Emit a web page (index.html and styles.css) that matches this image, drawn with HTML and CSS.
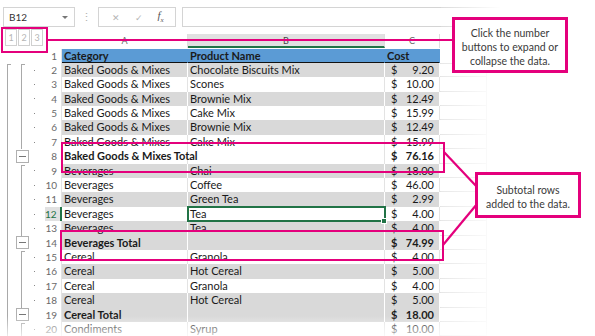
FILE: index.html
```html
<!DOCTYPE html>
<html lang="en">
<head>
    <meta charset="UTF-8">
    <meta name="viewport" content="width=device-width, initial-scale=1.0">
    <title>Subtotal outline</title>
    <link rel="stylesheet" href="styles.css">
</head>
<body>
    <div class="formula-bar">
        <div class="name-box"><span>B12</span><span class="arrow"></span></div>
        <div class="grip">&#8942;</div>
        <div class="fb-buttons">
            <span>&#10005;</span>
            <span>&#10003;</span>
            <span class="fx"><i>f</i><sub>x</sub></span>
        </div>
        <div class="fb-input"></div>
    </div>

    <div class="sheet-head">
        <div class="levels">
            <span>1</span><span>2</span><span>3</span>
        </div>
        <div class="corner"></div>
        <div class="col-head">A</div>
        <div class="col-head active">B</div>
        <div class="col-head">C</div>
        <div class="col-head"></div>
    </div>

    <div class="sheet">
        <div class="row head">
            <div class="ol"></div>
            <div class="rn">1</div>
            <div class="c">Category</div>
            <div class="c">Product Name</div>
            <div class="c">Cost</div>
            <div class="d"></div>
        </div>
        <div class="row band">
            <div class="ol"><span class="g1 first"></span><span class="g2 first"></span><span class="g3"></span></div>
            <div class="rn">2</div>
            <div class="c">Baked Goods &amp; Mixes</div>
            <div class="c">Chocolate Biscuits Mix</div>
            <div class="c cost"><span>$</span><span>9.20</span></div>
            <div class="d"></div>
        </div>
        <div class="row">
            <div class="ol"><span class="g1"></span><span class="g2"></span><span class="g3"></span></div>
            <div class="rn">3</div>
            <div class="c">Baked Goods &amp; Mixes</div>
            <div class="c">Scones</div>
            <div class="c cost"><span>$</span><span>10.00</span></div>
            <div class="d"></div>
        </div>
        <div class="row band">
            <div class="ol"><span class="g1"></span><span class="g2"></span><span class="g3"></span></div>
            <div class="rn">4</div>
            <div class="c">Baked Goods &amp; Mixes</div>
            <div class="c">Brownie Mix</div>
            <div class="c cost"><span>$</span><span>12.49</span></div>
            <div class="d"></div>
        </div>
        <div class="row">
            <div class="ol"><span class="g1"></span><span class="g2"></span><span class="g3"></span></div>
            <div class="rn">5</div>
            <div class="c">Baked Goods &amp; Mixes</div>
            <div class="c">Cake Mix</div>
            <div class="c cost"><span>$</span><span>15.99</span></div>
            <div class="d"></div>
        </div>
        <div class="row band">
            <div class="ol"><span class="g1"></span><span class="g2"></span><span class="g3"></span></div>
            <div class="rn">6</div>
            <div class="c">Baked Goods &amp; Mixes</div>
            <div class="c">Brownie Mix</div>
            <div class="c cost"><span>$</span><span>12.49</span></div>
            <div class="d"></div>
        </div>
        <div class="row">
            <div class="ol"><span class="g1"></span><span class="g2"></span><span class="g3"></span></div>
            <div class="rn">7</div>
            <div class="c">Baked Goods &amp; Mixes</div>
            <div class="c">Cake Mix</div>
            <div class="c cost"><span>$</span><span>15.99</span></div>
            <div class="d"></div>
        </div>
        <div class="row total">
            <div class="ol"><span class="g1"></span><span class="g2 btn"></span><span class="g3 none"></span></div>
            <div class="rn">8</div>
            <div class="c">Baked Goods &amp; Mixes Total</div>
            <div class="c"></div>
            <div class="c cost"><span>$</span><span>76.16</span></div>
            <div class="d"></div>
        </div>
        <div class="row band">
            <div class="ol"><span class="g1"></span><span class="g2 first"></span><span class="g3"></span></div>
            <div class="rn">9</div>
            <div class="c">Beverages</div>
            <div class="c">Chai</div>
            <div class="c cost"><span>$</span><span>18.00</span></div>
            <div class="d"></div>
        </div>
        <div class="row">
            <div class="ol"><span class="g1"></span><span class="g2"></span><span class="g3"></span></div>
            <div class="rn">10</div>
            <div class="c">Beverages</div>
            <div class="c">Coffee</div>
            <div class="c cost"><span>$</span><span>46.00</span></div>
            <div class="d"></div>
        </div>
        <div class="row band">
            <div class="ol"><span class="g1"></span><span class="g2"></span><span class="g3"></span></div>
            <div class="rn">11</div>
            <div class="c">Beverages</div>
            <div class="c">Green Tea</div>
            <div class="c cost"><span>$</span><span>2.99</span></div>
            <div class="d"></div>
        </div>
        <div class="row">
            <div class="ol"><span class="g1"></span><span class="g2"></span><span class="g3"></span></div>
            <div class="rn sel">12</div>
            <div class="c">Beverages</div>
            <div class="c selected">Tea</div>
            <div class="c cost"><span>$</span><span>4.00</span></div>
            <div class="d"></div>
        </div>
        <div class="row band">
            <div class="ol"><span class="g1"></span><span class="g2"></span><span class="g3"></span></div>
            <div class="rn">13</div>
            <div class="c">Beverages</div>
            <div class="c">Tea</div>
            <div class="c cost"><span>$</span><span>4.00</span></div>
            <div class="d"></div>
        </div>
        <div class="row band total">
            <div class="ol"><span class="g1"></span><span class="g2 btn"></span><span class="g3 none"></span></div>
            <div class="rn">14</div>
            <div class="c">Beverages Total</div>
            <div class="c"></div>
            <div class="c cost"><span>$</span><span>74.99</span></div>
            <div class="d"></div>
        </div>
        <div class="row">
            <div class="ol"><span class="g1"></span><span class="g2 first"></span><span class="g3"></span></div>
            <div class="rn">15</div>
            <div class="c">Cereal</div>
            <div class="c">Granola</div>
            <div class="c cost"><span>$</span><span>4.00</span></div>
            <div class="d"></div>
        </div>
        <div class="row band">
            <div class="ol"><span class="g1"></span><span class="g2"></span><span class="g3"></span></div>
            <div class="rn">16</div>
            <div class="c">Cereal</div>
            <div class="c">Hot Cereal</div>
            <div class="c cost"><span>$</span><span>5.00</span></div>
            <div class="d"></div>
        </div>
        <div class="row">
            <div class="ol"><span class="g1"></span><span class="g2"></span><span class="g3"></span></div>
            <div class="rn">17</div>
            <div class="c">Cereal</div>
            <div class="c">Granola</div>
            <div class="c cost"><span>$</span><span>4.00</span></div>
            <div class="d"></div>
        </div>
        <div class="row band">
            <div class="ol"><span class="g1"></span><span class="g2"></span><span class="g3"></span></div>
            <div class="rn">18</div>
            <div class="c">Cereal</div>
            <div class="c">Hot Cereal</div>
            <div class="c cost"><span>$</span><span>5.00</span></div>
            <div class="d"></div>
        </div>
        <div class="row band total">
            <div class="ol"><span class="g1"></span><span class="g2 btn"></span><span class="g3 none"></span></div>
            <div class="rn">19</div>
            <div class="c">Cereal Total</div>
            <div class="c"></div>
            <div class="c cost"><span>$</span><span>18.00</span></div>
            <div class="d"></div>
        </div>
        <div class="row">
            <div class="ol"><span class="g1"></span><span class="g2 first"></span><span class="g3"></span></div>
            <div class="rn">20</div>
            <div class="c">Condiments</div>
            <div class="c">Syrup</div>
            <div class="c cost"><span>$</span><span>10.00</span></div>
            <div class="d"></div>
        </div>
    </div>

    <!-- fades at the edges of the screenshot -->
    <div class="fade-right"></div>
    <div class="fade-bottom"></div>

    <!-- callout annotations -->
    <div class="mark mark-levels"></div>
    <div class="mark mark-row8"></div>
    <div class="mark mark-row14"></div>
    <svg class="connectors" width="595" height="336" viewBox="0 0 595 336">
        <line x1="48" y1="40" x2="453" y2="40" />
        <line x1="444" y1="152" x2="477" y2="187" />
        <line x1="443" y1="245" x2="477" y2="204" />
    </svg>
    <div class="callout callout-levels">Click the number<br>buttons to expand or<br>collapse the data.</div>
    <div class="callout callout-totals">Subtotal rows<br>added to the data.</div>
</body>
</html>
```

FILE: styles.css
```css
body {
    margin: 0;
    width: 595px;
    height: 336px;
    overflow: hidden;
    position: relative;
    background-color: #ffffff;
    color: #1a1a1a;
    font-family: Lato, "Open Sans", sans-serif;
    font-size: 11px;
}

/* formula bar */
.formula-bar {
    display: flex;
    align-items: center;
    height: 20px;
    margin-top: 7px;
    padding-left: 3px;
}

.name-box {
    width: 72px;
    height: 20px;
    box-sizing: border-box;
    border: 1px solid #d4d4d4;
    display: flex;
    align-items: center;
    justify-content: space-between;
    padding: 0 6px 0 5px;
    font-size: 10px;
    color: #333;
}

.arrow {
    width: 0;
    height: 0;
    border-left: 3px solid transparent;
    border-right: 3px solid transparent;
    border-top: 3px solid #777;
}

.grip {
    width: 23px;
    text-align: center;
    color: #b0b0b0;
    font-size: 11px;
}

.fb-buttons {
    width: 78px;
    height: 20px;
    box-sizing: border-box;
    border: 1px solid #d4d4d4;
    display: flex;
    align-items: center;
    justify-content: space-around;
    padding: 0 4px 0 6px;
    color: #b5b5b5;
    font-size: 9px;
}

.fx {
    color: #555;
    font-family: "Liberation Serif", serif;
    font-size: 11px;
}

.fx sub {
    font-size: 7px;
    font-style: italic;
}

.fb-input {
    flex: 1;
    height: 20px;
    box-sizing: border-box;
    margin-left: 6px;
    border: 1px solid #d4d4d4;
    border-right: none;
}

/* column headers and outline level buttons */
.sheet-head {
    display: grid;
    grid-template-columns: 45px 17px 126px 197px 55px 47px;
    height: 21.5px;
    align-items: end;
}

.levels {
    display: flex;
    align-self: start;
    margin: 2px 0 0 5px;
}

.levels span {
    width: 12px;
    height: 17px;
    box-sizing: border-box;
    border: 1px solid #d0d0d0;
    margin-right: 1px;
    text-align: center;
    line-height: 15px;
    font-size: 9px;
    color: #b5b5b5;
}

.corner {
    height: 14px;
}

.col-head {
    height: 14px;
    margin-bottom: 1px;
    box-sizing: border-box;
    border-right: 1px solid #dedede;
    text-align: center;
    font-size: 9px;
    line-height: 14px;
    color: #6a6a6a;
}

.col-head.active {
    background-color: #e1e1e1;
    border-bottom: 2px solid #217346;
    color: #444;
}

/* worksheet rows */
.row {
    display: grid;
    grid-template-columns: 45px 17px 126px 197px 55px 47px;
    height: 14.4px;
    line-height: 14.4px;
}

.c {
    padding-left: 2px;
    white-space: nowrap;
    box-sizing: border-box;
    border-right: 1px solid #e3e3e3;
}

.band .c {
    background-color: #d9d9d9;
    border-right-color: #ffffff;
}

.cost {
    display: flex;
    justify-content: space-between;
    padding: 0 5px 0 6px;
}

.head .c {
    background-color: #5b9bd5;
    font-weight: bold;
    border-bottom: 2px solid #111;
    border-right-color: #5b9bd5;
    line-height: 13px;
}

.total .c {
    font-weight: bold;
}

.d {
    box-sizing: border-box;
    border-right: 1px solid #e3e3e3;
    border-bottom: 1px solid #e3e3e3;
}

.rn {
    box-sizing: border-box;
    text-align: right;
    padding-right: 4px;
    font-size: 10px;
    color: #6a6a6a;
    border-right: 1px solid #e3e3e3;
}

.rn.sel {
    background-color: #e1e1e1;
    color: #217346;
    border-right: 2px solid #217346;
}

.selected {
    position: relative;
    outline: 2px solid #217346;
    outline-offset: -1px;
}

.selected::after {
    content: "";
    position: absolute;
    right: -3px;
    bottom: -3px;
    width: 4px;
    height: 4px;
    background-color: #217346;
    border: 1px solid #fff;
}

/* outline gutter */
.ol {
    display: grid;
    grid-template-columns: 14px 16px 15px;
}

.g1 {
    margin-left: 7px;
    border-left: 1px solid #a9a9a9;
}

.g2 {
    margin-left: 7px;
    border-left: 1px solid #a9a9a9;
}

.g1.first,
.g2.first {
    margin-top: 1px;
    width: 3px;
    border-top: 1px solid #a9a9a9;
}

.g2.btn {
    margin: 0 0 0 2px;
    align-self: center;
    width: 13px;
    height: 13px;
    box-sizing: border-box;
    border: 1px solid #b0b0b0;
    display: flex;
    align-items: center;
    justify-content: center;
}

.g2.btn::before {
    content: "";
    width: 7px;
    height: 1px;
    background-color: #777;
}

.g3 {
    display: flex;
    align-items: center;
    padding-left: 4px;
}

.g3::before {
    content: "";
    width: 1px;
    height: 1px;
    background-color: #888;
}

.g3.none::before {
    display: none;
}

/* edge fades */
.fade-right {
    position: absolute;
    left: 441px;
    top: 0;
    width: 154px;
    height: 336px;
    background: linear-gradient(to right, rgba(255, 255, 255, 0.15), #fff 60px);
}

.fade-bottom {
    position: absolute;
    left: 0;
    top: 316px;
    width: 595px;
    height: 20px;
    background: linear-gradient(to bottom, rgba(255, 255, 255, 0), rgba(255, 255, 255, 0.75));
}

/* annotations */
.mark {
    position: absolute;
    border: 2.5px solid #e4007c;
    box-sizing: border-box;
}

.mark-levels {
    left: 1px;
    top: 27px;
    width: 47px;
    height: 26px;
}

.mark-row8 {
    left: 61px;
    top: 142px;
    width: 384px;
    height: 31px;
}

.mark-row14 {
    left: 60px;
    top: 230px;
    width: 384px;
    height: 31px;
}

.connectors {
    position: absolute;
    left: 0;
    top: 0;
}

.connectors line {
    stroke: #e4007c;
    stroke-width: 2.2;
}

.callout {
    position: absolute;
    box-sizing: border-box;
    background-color: #fff;
    border: 3px solid #e4007c;
    text-align: center;
    font-size: 10.5px;
    line-height: 14px;
    color: #3a3a3a;
}

.callout-levels {
    left: 452px;
    top: 17px;
    width: 116px;
    height: 56px;
    padding-top: 6px;
}

.callout-totals {
    left: 475px;
    top: 172px;
    width: 106px;
    height: 46px;
    padding-top: 8px;
}
```
